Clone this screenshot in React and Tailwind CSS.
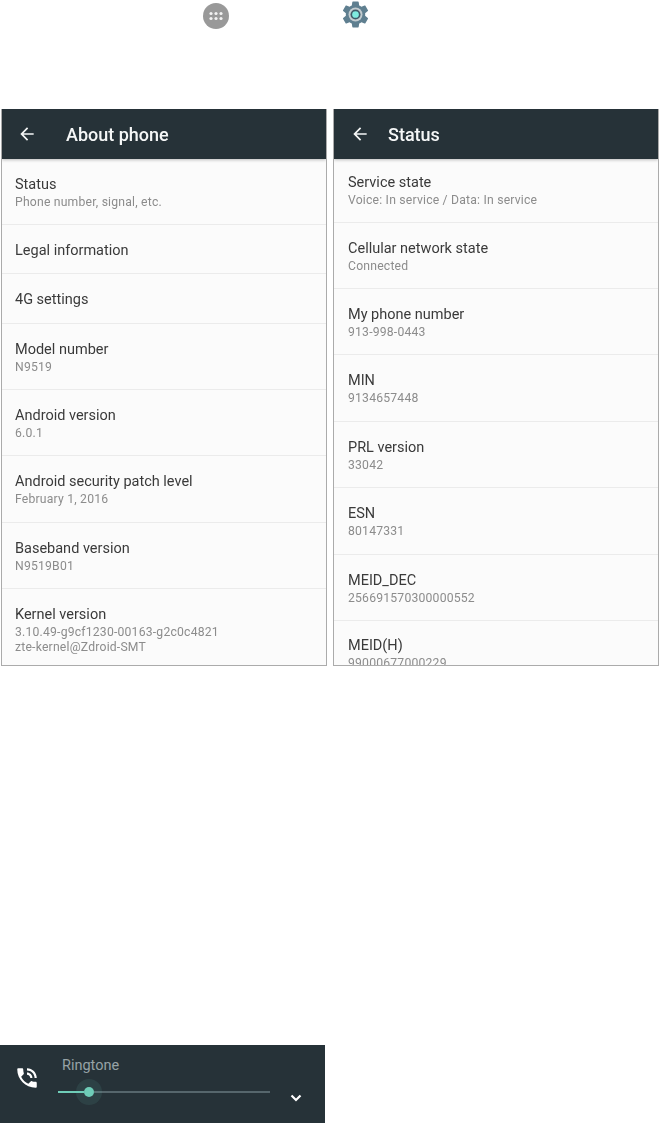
import React from 'react'

// --- Icons ---

const IconBack = () => (
  <svg className="w-5 h-5" viewBox="0 0 24 24" fill="#f4f6f6">
    <path d="M20 11H7.83l5.59-5.59L12 4l-8 8 8 8 1.41-1.41L7.83 13H20v-2z" />
  </svg>
)

const IconApps = () => (
  <svg className="w-[26px] h-[26px]" viewBox="0 0 26 26">
    <circle cx="13" cy="13" r="13" fill="#999999" />
    {[8, 13, 18].map((x) => (
      <g key={x} fill="#f2f2f2">
        <circle cx={x} cy="10.5" r="1.6" />
        <circle cx={x} cy="15.5" r="1.6" />
      </g>
    ))}
  </svg>
)

const IconGear = () => (
  <svg className="w-[31px] h-[31px]" viewBox="0 0 24 24">
    <path
      fill="#5f7f90"
      d="M19.43 12.98c.04-.32.07-.64.07-.98s-.03-.66-.07-.98l2.11-1.65c.19-.15.24-.42.12-.64l-2-3.46c-.12-.22-.39-.3-.61-.22l-2.49 1c-.52-.4-1.08-.73-1.69-.98l-.38-2.65C14.46 2.18 14.25 2 14 2h-4c-.25 0-.46.18-.49.42l-.38 2.65c-.61.25-1.17.59-1.69.98l-2.49-1c-.23-.09-.49 0-.61.22l-2 3.46c-.13.22-.07.49.12.64l2.11 1.65c-.04.32-.07.65-.07.98s.03.66.07.98l-2.11 1.65c-.19.15-.24.42-.12.64l2 3.46c.12.22.39.3.61.22l2.49-1c.52.4 1.08.73 1.69.98l.38 2.65c.03.24.24.42.49.42h4c.25 0 .46-.18.49-.42l.38-2.65c.61-.25 1.17-.59 1.69-.98l2.49 1c.23.09.49 0 .61-.22l2-3.46c.12-.22.07-.49-.12-.64l-2.11-1.65z"
    />
    <circle cx="12" cy="12" r="5.4" fill="#c3ccd0" />
    <circle cx="12" cy="12" r="3.9" fill="#3f5a68" />
    <circle cx="12" cy="12" r="2.6" fill="#7eeadf" />
  </svg>
)

const IconPhone = () => (
  <svg className="w-[26px] h-[26px]" viewBox="0 0 24 24" fill="#ffffff">
    <path d="M20 15.5c-1.25 0-2.45-.2-3.57-.57-.35-.11-.74-.03-1.02.24l-2.2 2.2c-2.83-1.44-5.15-3.75-6.59-6.59l2.2-2.21c.28-.26.36-.65.25-1C8.7 6.45 8.5 5.25 8.5 4c0-.55-.45-1-1-1H4c-.55 0-1 .45-1 1 0 9.39 7.61 17 17 17 .55 0 1-.45 1-1v-3.5c0-.55-.45-1-1-1zM19 12h2c0-4.97-4.03-9-9-9v2c3.87 0 7 3.13 7 7zm-4 0h2c0-2.76-2.24-5-5-5v2c1.66 0 3 1.34 3 3z" />
  </svg>
)

const IconChevron = () => (
  <svg className="w-4 h-4" viewBox="0 0 16 16" fill="none" stroke="#ffffff" strokeWidth={2.2}>
    <path d="M3.5 5.5 8 10l4.5-4.5" />
  </svg>
)

// --- Data ---

const aboutRows = [
  { title: 'Status', sub: 'Phone number, signal, etc.', h: 'h-[66px]' },
  { title: 'Legal information', h: 'h-[49px]' },
  { title: '4G settings', h: 'h-[50px]' },
  { title: 'Model number', sub: 'N9519', h: 'h-[66px]' },
  { title: 'Android version', sub: '6.0.1', h: 'h-[66px]' },
  { title: 'Android security patch level', sub: 'February 1, 2016', h: 'h-[67px]' },
  { title: 'Baseband version', sub: 'N9519B01', h: 'h-[66px]' },
]

const statusRows = [
  { title: 'Service state', sub: 'Voice: In service / Data: In service', h: 'h-[64px] pb-[2px]' },
  { title: 'Cellular network state', sub: 'Connected', h: 'h-[66px]' },
  { title: 'My phone number', sub: '913-998-0443', h: 'h-[66px]' },
  { title: 'MIN', sub: '9134657448', h: 'h-[67px]' },
  { title: 'PRL version', sub: '33042', h: 'h-[66px]' },
  { title: 'ESN', sub: '80147331', h: 'h-[67px]' },
  { title: 'MEID_DEC', sub: '256691570300000552', h: 'h-[66px]' },
]

const Row = ({ title, sub, h, inset }) => (
  <div className={`${h} ${inset} shrink-0 flex flex-col justify-center pt-[2px] border-b border-[#ebebeb]`}>
    <div className="text-[14.5px] leading-[19px] text-[#3a3a3a]">{title}</div>
    {sub && <div className="text-[12.2px] leading-[17px] text-[#8c8c8c] tracking-[0.2px]">{sub}</div>}
  </div>
)

const Panel = ({ title, headClass, titleClass, inset, rows, children }) => (
  <div className="w-[326px] h-[557px] flex flex-col overflow-hidden border-x border-b border-[#ababab] bg-[#fbfbfb] blur-[0.4px]">
    <div className={`${headClass} h-[50px] shrink-0 flex items-center bg-[#263238] shadow-[0_1px_3px_rgba(0,0,0,0.25)]`}>
      <IconBack />
      <span className={`${titleClass} pt-[1px] text-[18px] font-medium text-[#f5f7f7]`}>{title}</span>
    </div>
    {rows.map((row) => (
      <Row key={row.title} inset={inset} {...row} />
    ))}
    {children}
  </div>
)

export default function App() {
  return (
    <div className="w-[660px] h-[1123px] overflow-hidden flex flex-col bg-white font-['Roboto',sans-serif]">
      {/* icon line */}
      <div className="h-[28px] flex items-center pl-[203px]">
        <div className="mt-[3px]">
          <IconApps />
        </div>
        <div className="ml-[111px]">
          <IconGear />
        </div>
      </div>

      {/* screenshots */}
      <div className="mt-[81px] flex gap-[6px] pl-[1px]">
        <Panel title="About phone" headClass="pl-[15px]" titleClass="ml-[29px]" inset="pl-[13px]" rows={aboutRows}>
          <div className="pl-[13px] pt-[16px]">
            <div className="text-[14.5px] leading-[19px] text-[#3a3a3a]">Kernel version</div>
            <div className="mt-[1px] text-[12.2px] leading-[15px] text-[#8c8c8c] tracking-[0.2px]">
              3.10.49-g9cf1230-00163-g2c0c4821
              <br />
              zte-kernel@Zdroid-SMT
            </div>
          </div>
        </Panel>
        <Panel title="Status" headClass="pl-[16px]" titleClass="ml-[18px]" inset="pl-[14px]" rows={statusRows}>
          <div className="pl-[14px] pt-[15px]">
            <div className="text-[14.5px] leading-[19px] text-[#3a3a3a]">MEID(H)</div>
            <div className="text-[12.2px] leading-[17px] text-[#8c8c8c] tracking-[0.2px]">99000677000229</div>
          </div>
        </Panel>
      </div>

      {/* ringtone volume panel */}
      <div className="mt-[379px] w-[325px] h-[79px] flex bg-[#263238]">
        <div className="w-[58px] shrink-0 pl-[14px] pt-[20px]">
          <IconPhone />
        </div>
        <div className="w-[212px] shrink-0 pt-[13px]">
          <div className="pl-[4px] text-[14.5px] leading-[16px] text-[#97a3a6]">Ringtone</div>
          <div className="mt-[10px] h-[16px] flex items-center">
            <div className="w-[26px] h-[2px] bg-[#6fcdb8]" />
            <div className="relative w-[10px] h-[10px] shrink-0 rounded-full bg-[#6fcdb8]">
              <div className="absolute -inset-[8px] rounded-full bg-[#6fcdb8]/10" />
            </div>
            <div className="flex-1 h-[2px] bg-[#56666c]" />
          </div>
        </div>
        <div className="pl-[18px] pt-[45px]">
          <IconChevron />
        </div>
      </div>
    </div>
  )
}
